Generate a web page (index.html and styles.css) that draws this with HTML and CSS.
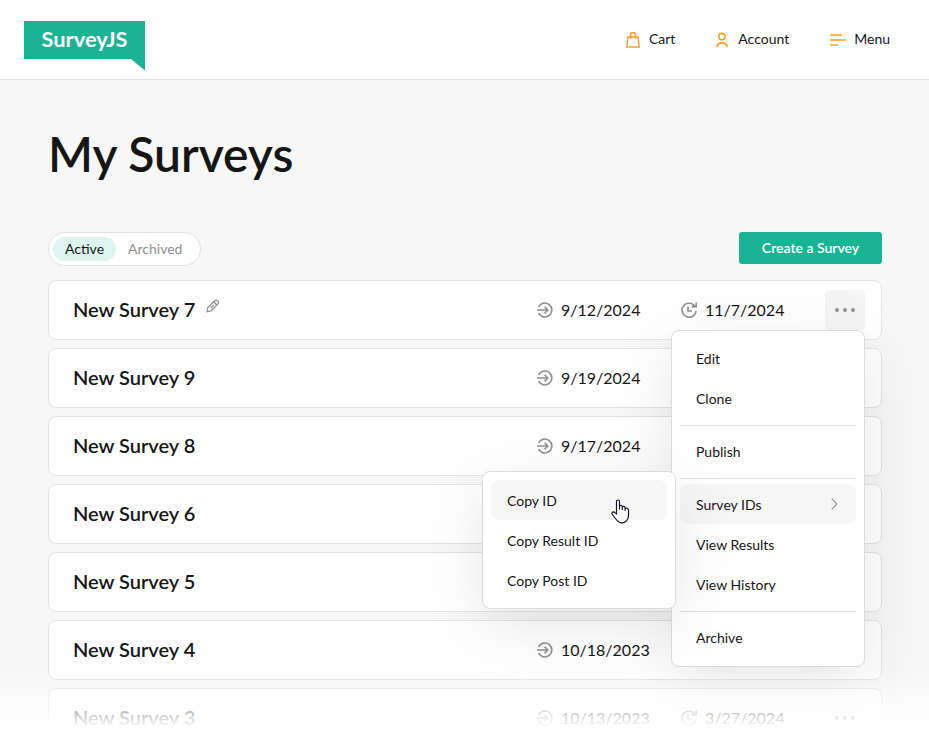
FILE: index.html
```html
<!DOCTYPE html>
<html lang="en">
<head>
<meta charset="utf-8">
<title>My Surveys</title>
<link rel="stylesheet" href="styles.css">
</head>
<body>
<svg class="defs" width="0" height="0" aria-hidden="true">
  <symbol id="i-created" viewBox="0 0 16 16"><path d="M1.6 4.8A7 7 0 1 1 1.6 11.2M0 8H10.6M7.6 4.8L10.8 8L7.6 11.2" fill="none" stroke="currentColor" stroke-width="1.7"/></symbol>
  <symbol id="i-updated" viewBox="0 0 16 16"><path d="M13.6 4A7 7 0 1 0 15 9M15.2 .6V4.6H10.6M7 4.6V9H11" fill="none" stroke="currentColor" stroke-width="1.7"/></symbol>
  <symbol id="i-dots" viewBox="0 0 20 4"><g fill="currentColor"><circle cx="2" cy="2" r="2"/><circle cx="10" cy="2" r="2"/><circle cx="18" cy="2" r="2"/></g></symbol>
</svg>
<header class="top">
  <a class="logo">
    <svg width="121" height="50" viewBox="0 0 121 50"><path d="M0 0H121V49.500L107 38H0Z" fill="#1ab394"/><text x="17.500" y="25.500" textLength="86" lengthAdjust="spacingAndGlyphs">SurveyJS</text></svg>
  </a>
  <nav class="nav">
    <a class="nav-item"><svg width="14" height="16" viewBox="0 0 14 16"><path d="M2 5H12L13.200 15H.8ZM4.500 7V3.200a2.500 2.500 0 0 1 5 0V7" fill="none" stroke="#ff9f2a" stroke-width="1.500"/></svg>Cart</a>
    <a class="nav-item account"><svg width="12" height="16" viewBox="0 0 12 16"><g fill="none" stroke="#ff9f2a" stroke-width="1.600"><circle cx="6" cy="4.600" r="3.200"/><path d="M.8 15.200C1.600 9.400 10.400 9.400 11.200 15.200"/></g></svg>Account</a>
    <a class="nav-item menu-link"><svg width="16" height="12" viewBox="0 0 16 12"><path d="M0 1H12M0 6H16M0 11H8" stroke="#ff9f2a" stroke-width="1.700"/></svg>Menu</a>
  </nav>
</header>
<main class="page">
  <h1>My Surveys</h1>
  <div class="toolbar">
    <div class="tabs"><span class="tab active">Active</span><span class="tab">Archived</span></div>
    <button class="create">Create a Survey</button>
  </div>
  <div class="list">
    <div class="row"><div class="name">New Survey 7<svg class="pencil" width="14" height="14" viewBox="0 0 14 14"><path d="M1 12.800L1.700 8.700L8.800 1.600Q10.200 .4 11.700 1.900Q13.200 3.600 12 4.900L5 12ZM7.700 2.800L10.900 6M4.700 9.200L8 5.900" fill="none" stroke="#909090" stroke-width="1.300"/></svg></div><div class="date"><svg><use href="#i-created"/></svg>9/12/2024</div><div class="date"><svg><use href="#i-updated"/></svg>11/7/2024</div><div class="more open"><svg><use href="#i-dots"/></svg></div></div>
    <div class="row"><div class="name">New Survey 9</div><div class="date"><svg><use href="#i-created"/></svg>9/19/2024</div></div>
    <div class="row"><div class="name">New Survey 8</div><div class="date"><svg><use href="#i-created"/></svg>9/17/2024</div></div>
    <div class="row"><div class="name">New Survey 6</div></div>
    <div class="row"><div class="name">New Survey 5</div></div>
    <div class="row"><div class="name">New Survey 4</div><div class="date"><svg><use href="#i-created"/></svg>10/18/2023</div></div>
    <div class="row"><div class="name">New Survey 3</div><div class="date"><svg><use href="#i-created"/></svg>10/13/2023</div><div class="date"><svg><use href="#i-updated"/></svg>3/27/2024</div><div class="more"><svg><use href="#i-dots"/></svg></div></div>
  </div>
</main>
<div class="popup actions">
  <div class="item">Edit</div>
  <div class="item">Clone</div>
  <hr>
  <div class="item">Publish</div>
  <hr>
  <div class="item selected">Survey IDs<svg width="7" height="12" viewBox="0 0 7 12"><path d="M.7 .7L6 6L.7 11.300" fill="none" stroke="#909090" stroke-width="1.100"/></svg></div>
  <div class="item">View Results</div>
  <div class="item">View History</div>
  <hr>
  <div class="item">Archive</div>
</div>
<div class="popup ids">
  <div class="item selected">Copy ID</div>
  <div class="item">Copy Result ID</div>
  <div class="item">Copy Post ID</div>
</div>
<svg class="cursor" width="19" height="25" viewBox="0 0 19 25"><path d="M5.500 15V2.700Q5.500 1 7 1T8.500 2.700V10V7.500Q8.600 6.300 9.900 6.300T11.300 7.600V10.500V8.300Q11.500 7.200 12.700 7.300T14.100 8.500V11.500V9.800Q14.300 8.900 15.500 9T17.500 10.700V16Q17.500 19 16 21Q14.500 23.800 11 23.800Q7.500 23.800 5.700 21L1.300 15.500Q.5 13.800 1.600 13.100Q2.900 12.500 3.900 13.600Z" fill="#fff" stroke="#15152b" stroke-width="1.200" stroke-linejoin="round"/></svg>
<div class="fade"></div>
</body>
</html>
```
FILE: styles.css
```css
* { box-sizing: border-box; }
body { margin: 0; height: 736px; overflow: hidden; position: relative; background: #f7f7f7; color: #161616; font-family: Lato, "Liberation Sans", sans-serif; font-size: 14px; }
.defs { position: absolute; }
svg { flex: none; display: block; }
.top { height: 80px; background: #fff; border-bottom: 1px solid #e3e3e3; display: flex; justify-content: space-between; padding: 21px 39px 0 24px; }
.logo text { font: 700 20px Lato, sans-serif; fill: #fff; }
.nav { display: flex; align-items: center; height: 35px; gap: 41px; }
.nav-item { display: flex; align-items: center; gap: 9px; line-height: 20px; }
.nav-item svg { position: relative; top: 1px; }
.account { gap: 10px; }
.menu-link { gap: 8px; }
.page { padding: 42px 47px 0 48px; }
h1 { margin: 0; font-size: 48px; line-height: 64px; font-weight: 600; }
.toolbar { display: flex; justify-content: space-between; align-items: flex-start; margin-top: 46px; height: 48px; }
.tabs { display: flex; height: 34px; width: 153px; padding: 4px; border: 1px solid #e3e3e3; border-radius: 17px; background: #fff; }
.tab { height: 24px; line-height: 23px; padding: 0 12px; border-radius: 12px; color: #909090; }
.tab.active { background: #ddf4ef; color: #161616; }
.create { width: 143px; height: 32px; border: 0; border-radius: 3px; background: #1ab394; color: #fff; font: 600 14px/30px Lato, sans-serif; padding: 0; }
.list { display: flex; flex-direction: column; gap: 8px; }
.row { display: grid; grid-template-columns: 464px 144px 144px 40px; align-items: center; height: 60px; padding-left: 24px; background: #fff; border: 1px solid #e3e3e3; border-radius: 8px; }
.name { display: flex; font-size: 20px; line-height: 24px; font-weight: 600; padding-bottom: 2px; }
.pencil { margin: 2px 0 0 11px; }
.date { display: flex; align-items: center; gap: 8px; font-size: 16px; line-height: 24px; }
.date svg { width: 16px; height: 16px; color: #909090; }
.more { width: 40px; height: 40px; display: flex; align-items: center; justify-content: center; border-radius: 4px; color: #909090; }
.more.open { background: #f5f5f5; }
.more svg { width: 20px; height: 4px; }
.popup { position: absolute; background: #fff; border: 1px solid #dcdcdc; border-radius: 8px; padding: 7px 8px; box-shadow: 0 16px 64px rgba(0, 0, 0, .1); }
.actions { left: 671px; top: 330px; width: 194px; height: 337px; }
.ids { left: 482px; top: 471px; width: 194px; height: 138px; padding-top: 8px; }
.item { height: 40px; line-height: 39px; padding: 0 16px; border-radius: 8px; display: flex; justify-content: space-between; align-items: center; }
.item.selected { background: #f6f6f6; }
.item svg { margin-right: 2px; }
hr { border: 0; height: 1px; background: #dfdfdf; margin: 7px 0 5px; }
.cursor { position: absolute; left: 611px; top: 499px; }
.fade { position: absolute; left: 0; right: 0; bottom: 0; height: 66px; background: linear-gradient(rgba(255, 255, 255, 0), #fff 88%); }
```
